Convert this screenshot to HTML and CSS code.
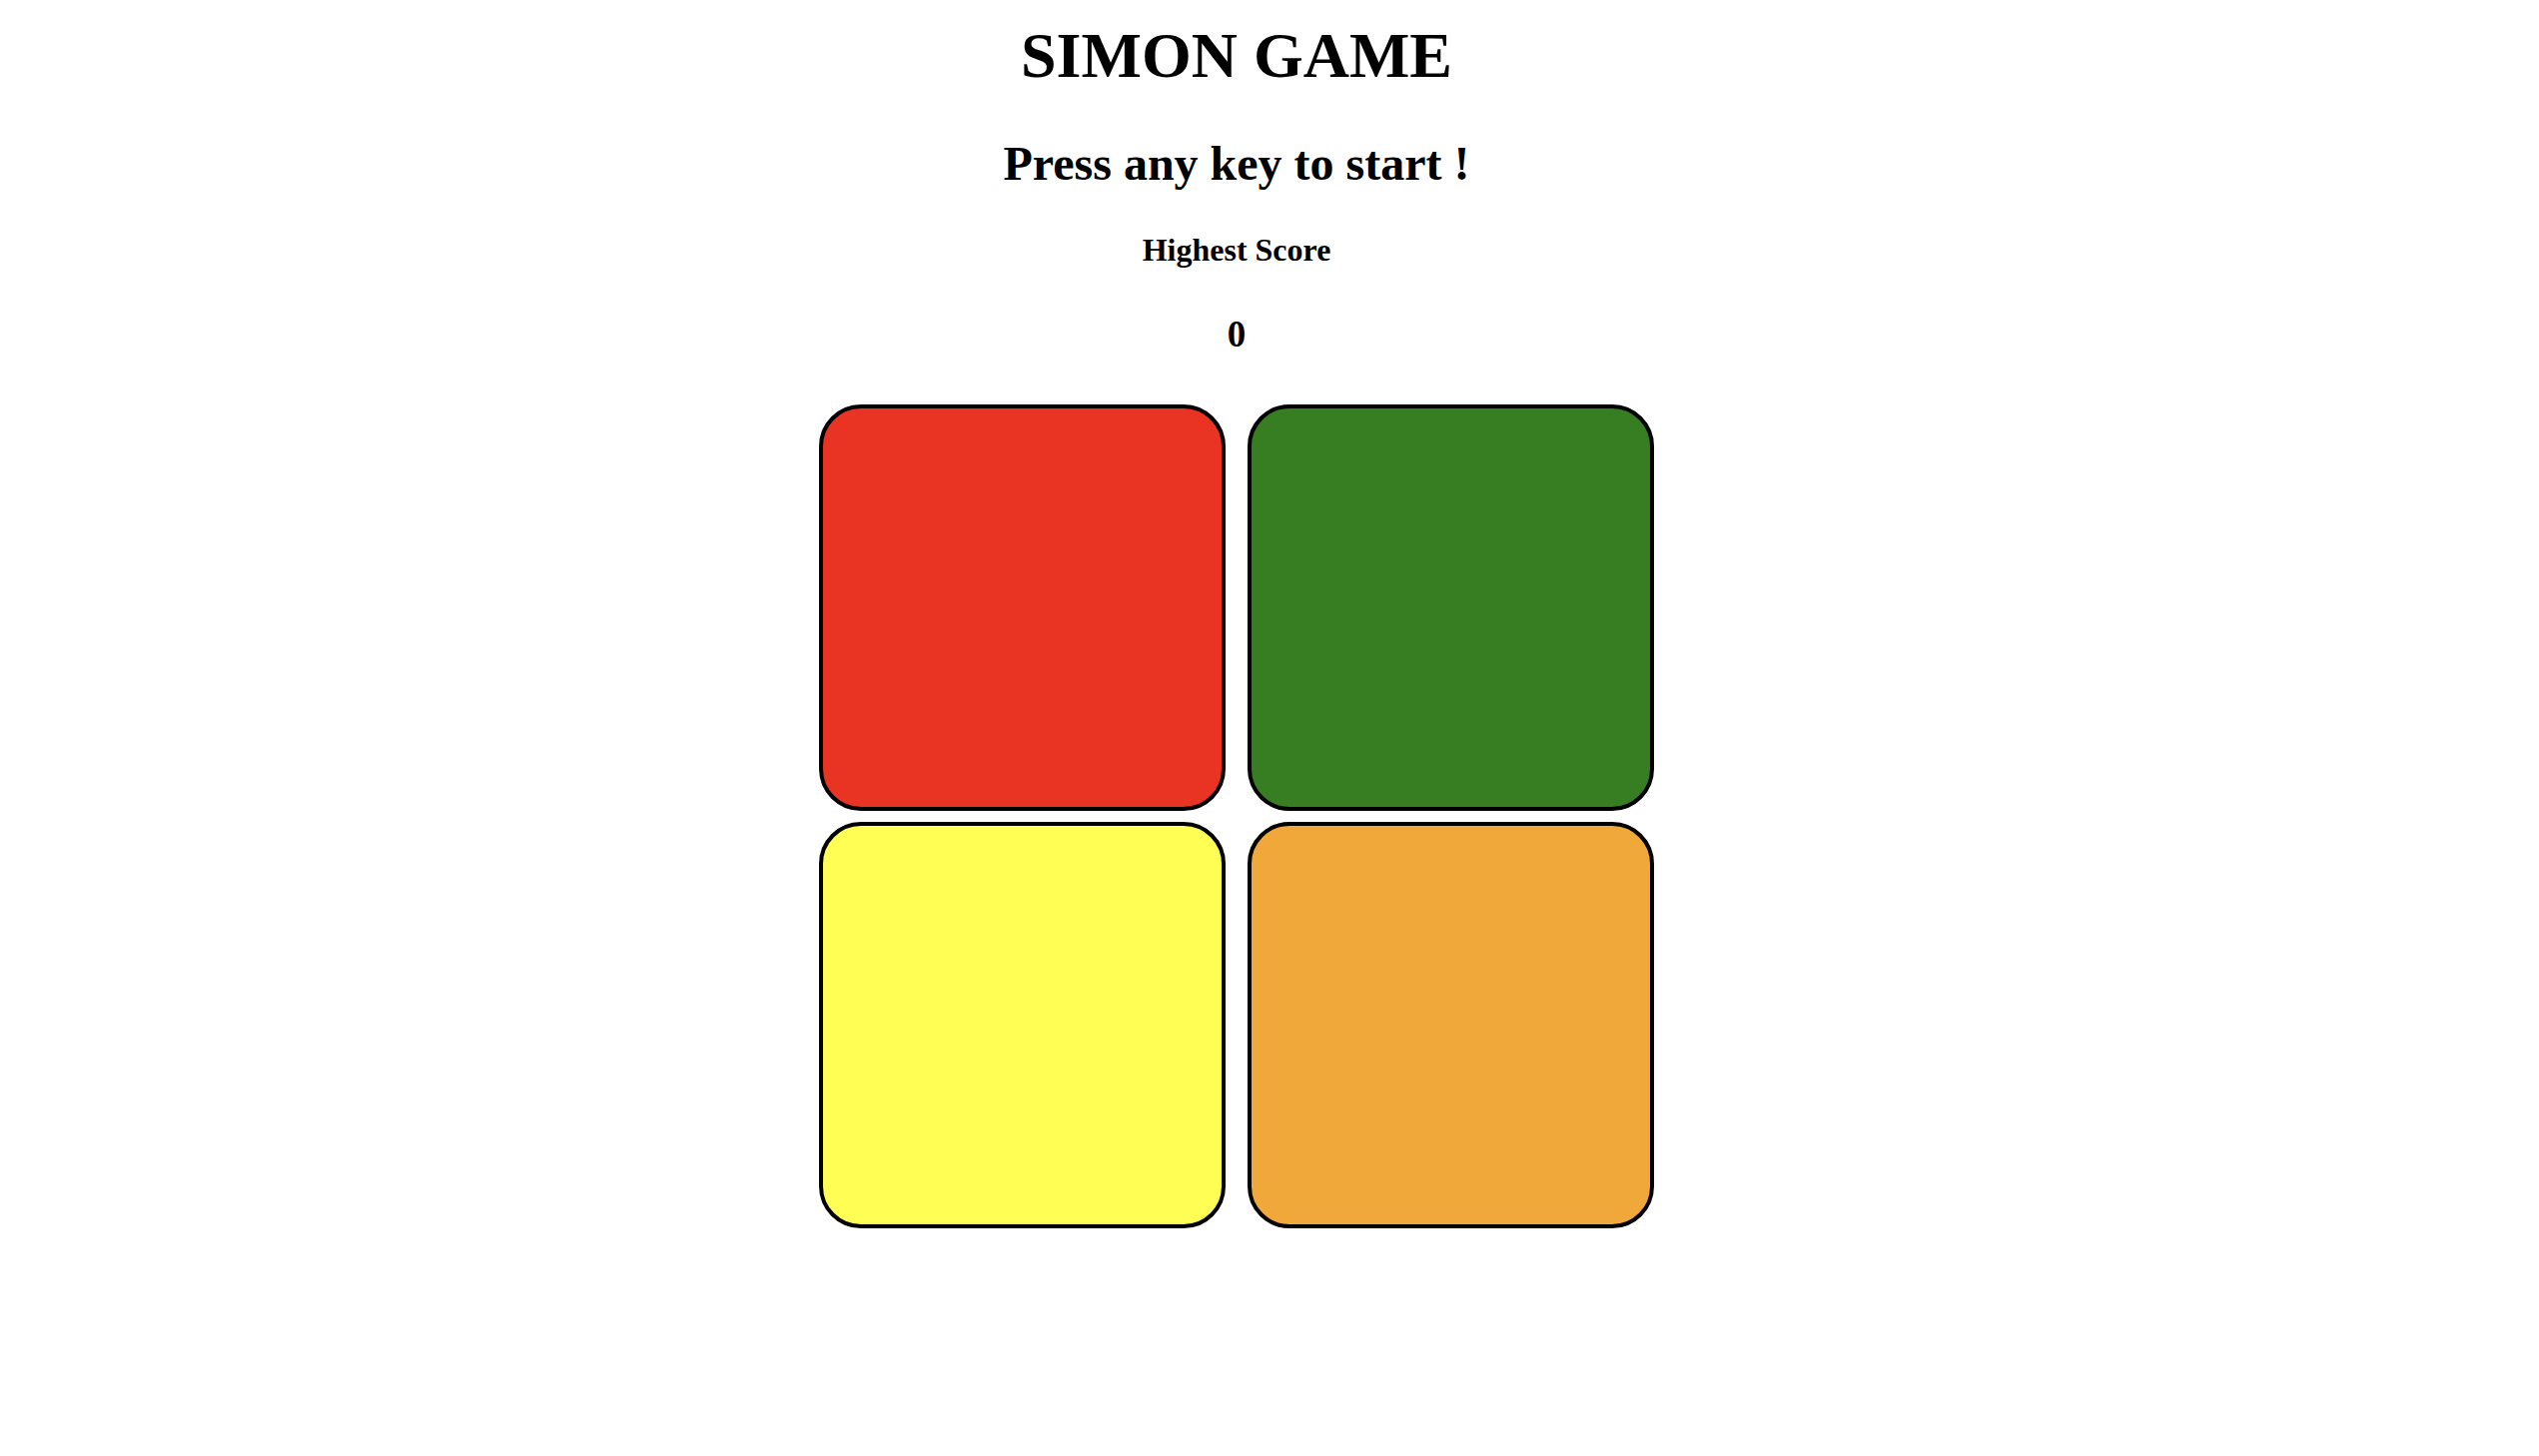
FILE: index.html
```html
<!DOCTYPE html>
<html lang="en">
<head>
<meta charset="utf-8">
<title>Simon Game</title>
<link rel="stylesheet" href="styles.css">
</head>
<body>
<main class="page">
  <h1 class="title">SIMON GAME</h1>
  <h2 class="status">Press any key to start !</h2>
  <h3 class="score-label">Highest Score</h3>
  <h3 class="score-value">0</h3>
  <div class="board">
    <div class="btn btn-red"></div>
    <div class="btn btn-green"></div>
    <div class="btn btn-yellow"></div>
    <div class="btn btn-orange"></div>
  </div>
</main>
</body>
</html>
```

FILE: styles.css
```css
html, body {
  margin: 0;
  padding: 0;
  background: #ffffff;
}

body {
  font-family: "Liberation Serif", "Times New Roman", serif;
  color: #000000;
}

.page {
  display: flex;
  flex-direction: column;
  align-items: center;
  text-align: center;
  padding: 19px 66px 0 0;
}

.title {
  margin: 0;
  font-size: 64px;
  line-height: 74px;
  font-weight: bold;
}

.status {
  margin: 43px 0 0;
  font-size: 48px;
  line-height: 56px;
  font-weight: bold;
}

.score-label {
  margin: 40px 0 0;
  font-size: 32px;
  line-height: 37px;
  font-weight: bold;
}

.score-value {
  margin: 44px 0 0;
  font-size: 37px;
  line-height: 43px;
  font-weight: bold;
}

.board {
  margin-top: 49px;
  display: grid;
  grid-template-columns: 407px 407px;
  grid-template-rows: 407px 407px;
  column-gap: 22px;
  row-gap: 11px;
}

.btn {
  box-sizing: border-box;
  border: 4px solid #000000;
  border-radius: 42px;
}

.btn-red { background: #e93323; }
.btn-green { background: #377e22; }
.btn-yellow { background: #fffe54; }
.btn-orange { background: #f0a83b; }
```
